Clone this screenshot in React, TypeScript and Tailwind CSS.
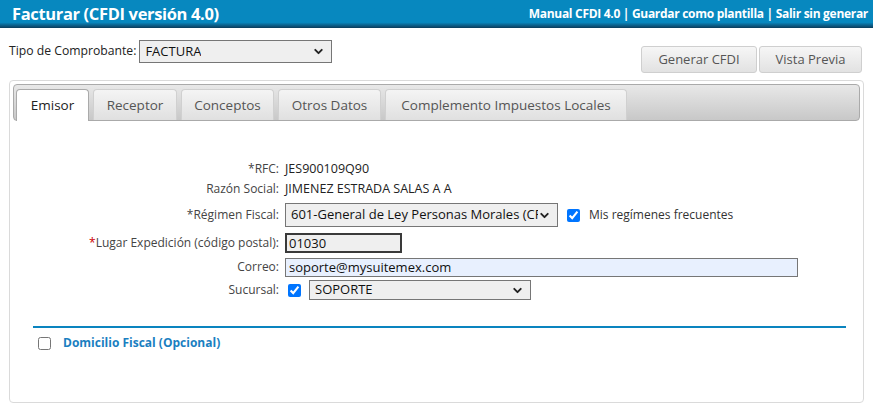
import { ChevronDown } from "lucide-react";

const font = { fontFamily: '"Open Sans", "Noto Sans", sans-serif' };

const tabs = [
  { name: "Emisor", w: "w-[73px]" },
  { name: "Receptor", w: "w-[84px]" },
  { name: "Conceptos", w: "w-[93px]" },
  { name: "Otros Datos", w: "w-[103px]" },
  { name: "Complemento Impuestos Locales", w: "w-[242px]" },
];

function Select({ value, className }: { value: string; className: string }) {
  return (
    <div
      className={`flex items-center justify-between border border-[#767676] bg-[#efefef] pl-[5px] pr-[6px] text-[13px] text-[#111] ${className}`}
    >
      <span className="overflow-hidden whitespace-nowrap">{value}</span>
      <ChevronDown size={13} strokeWidth={3.5} className="shrink-0 text-[#222]" />
    </div>
  );
}

function Label({ children }: { children: React.ReactNode }) {
  return <div className="text-right text-[12px] text-[#444] whitespace-nowrap">{children}</div>;
}

export default function App() {
  return (
    <div className="h-[406px] w-[873px] overflow-hidden bg-white" style={font}>
      <div className="flex h-[28px] items-center justify-between bg-gradient-to-b from-[#0788bf] from-80% to-[#0a3d5c] pl-[12px] pr-[5px] text-white">
        <div className="text-[16.5px] font-bold tracking-[-0.35px]">Facturar (CFDI versión 4.0)</div>
        <div className="text-[12px] font-bold tracking-[-0.3px]">
          Manual CFDI 4.0 | Guardar como plantilla | Salir sin generar
        </div>
      </div>

      <div className="flex items-start justify-between px-[9px] pt-[12px]">
        <div className="flex items-center gap-[3px] text-[12.2px] text-[#222]">
          <span>Tipo de Comprobante:</span>
          <Select value="FACTURA" className="h-[23px] w-[193px]" />
        </div>
        <div className="mr-[2px] mt-[6px] flex gap-[2px] text-[13px] text-[#555]">
          <button className="h-[27px] w-[116px] rounded-[3px] border border-[#cfcfcf] bg-gradient-to-b from-[#f6f6f6] to-[#e2e2e2]">
            Generar CFDI
          </button>
          <button className="h-[27px] w-[103px] rounded-[3px] border border-[#cfcfcf] bg-gradient-to-b from-[#f6f6f6] to-[#e2e2e2]">
            Vista Previa
          </button>
        </div>
      </div>

      <div className="mx-[9px] mt-[7px] h-[323px] rounded-[4px] border border-[#dadada] p-[3px]">
        <div className="flex h-[37px] items-end gap-[4px] rounded-[4px] border border-[#aaa] bg-gradient-to-b from-[#e8e8e8] to-[#c8c8c8] pl-[2px]">
          {tabs.map((t, i) => (
            <div
              key={t.name}
              className={
                i === 0
                  ? `-mb-px flex h-[32px] items-center justify-center rounded-t-[4px] border border-b-0 border-[#aaa] bg-white text-[13.5px] text-[#222] ${t.w}`
                  : `flex h-[31px] items-center justify-center rounded-t-[4px] border border-b-0 border-[#d0d0d0] bg-gradient-to-b from-[#f4f4f4] to-[#e0e0e0] text-[13.5px] text-[#555] ${t.w}`
              }
            >
              {t.name}
            </div>
          ))}
        </div>

        <div className="grid grid-cols-[266px_1fr] items-center gap-x-[6px] pt-[38px] pr-[60px]">
          <Label>*RFC:</Label>
          <div className="h-[20px] text-[12.5px] leading-[20px] text-[#222]">JES900109Q90</div>

          <Label>Razón Social:</Label>
          <div className="h-[20px] text-[12.5px] leading-[20px] text-[#222]">JIMENEZ ESTRADA SALAS A A</div>

          <Label>*Régimen Fiscal:</Label>
          <div className="flex h-[32px] items-center gap-[9px]">
            <Select value="601-General de Ley Personas Morales (CFDI 3.3/4.0)" className="h-[24px] w-[273px]" />
            <input type="checkbox" checked readOnly className="h-[13px] w-[13px] accent-[#0075ff]" />
            <span className="text-[12px] text-[#333]">Mis regímenes frecuentes</span>
          </div>

          <Label>
            <span className="text-[#c00]">*</span>Lugar Expedición (código postal):
          </Label>
          <div className="flex h-[24px] items-center">
            <div className="h-[20px] w-[117px] border-2 border-[#3a3a3a] bg-[#efefef] pl-[2px] text-[13px] leading-[16px] text-[#111]">
              01030
            </div>
          </div>

          <Label>Correo:</Label>
          <div className="flex h-[24px] items-center">
            <div className="h-[19px] w-[513px] border border-[#767676] bg-[#e8f0fe] pl-[3px] text-[13px] leading-[17px] text-[#111]">
              soporte@mysuitemex.com
            </div>
          </div>

          <Label>Sucursal:</Label>
          <div className="flex h-[22px] items-center gap-[8px]">
            <input type="checkbox" checked readOnly className="ml-[3px] h-[13px] w-[13px] accent-[#0075ff]" />
            <Select value="SOPORTE" className="h-[20px] w-[222px]" />
          </div>
        </div>

        <div className="ml-[20px] mr-[14px] mt-[25px] border-t-2 border-[#0a84bf]" />
        <div className="flex items-center gap-[12px] pl-[25px] pt-[6px]">
          <input type="checkbox" readOnly className="h-[13px] w-[13px]" />
          <span className="text-[12px] font-bold text-[#1a7fc1]">Domicilio Fiscal (Opcional)</span>
        </div>
      </div>
    </div>
  );
}
